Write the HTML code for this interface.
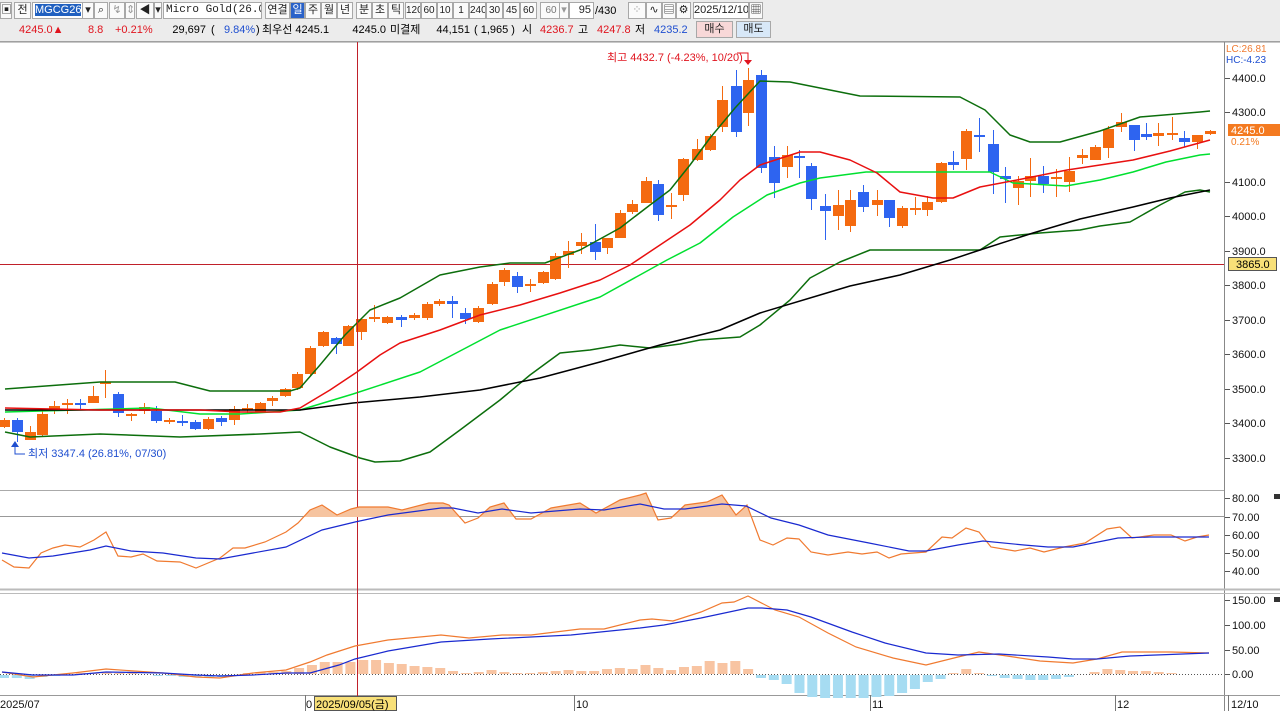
<!DOCTYPE html>
<html><head><meta charset="utf-8">
<style>
*{margin:0;padding:0;box-sizing:border-box}
body{width:1280px;height:711px;overflow:hidden;background:#fff;font-family:"Liberation Sans","Noto Sans CJK KR","NanumGothic",sans-serif;font-size:12px;position:relative}
.tb{position:absolute;left:0;top:0;width:1280px;height:42px;background:#ececec;border-bottom:1px solid #a0a0a0}
.a{position:absolute;white-space:nowrap;line-height:16px;font-size:11px}
.bx{position:absolute;height:17px;border:1px solid #a8a8a8;background:#fafafa;text-align:center;line-height:15px;font-size:11px;color:#222;white-space:nowrap;overflow:hidden}
.g{color:#999}
.r{color:#e0141e}.b{color:#1f4fd0}
svg{position:absolute;left:0;top:0}
</style></head><body>
<div class="tb">
 <div class="bx" style="left:0;top:2px;width:12px">▣</div>
 <div class="bx" style="left:14px;top:2px;width:17px">전</div>
 <div class="bx" style="left:32px;top:2px;width:62px;background:#fff;text-align:left;padding-left:2px"><span style="background:#2060c0;color:#fff">MGCG26</span></div>
 <div class="bx" style="left:82px;top:2px;width:12px">▾</div>
 <div class="bx" style="left:94px;top:2px;width:14px">⌕</div>
 <div class="bx g" style="left:109px;top:2px;width:16px">↯</div>
 <div class="bx g" style="left:125px;top:2px;width:10px">⇕</div>
 <div class="bx" style="left:136px;top:2px;width:18px">◀</div>
 <div class="bx" style="left:154px;top:2px;width:8px">▾</div>
 <div class="bx" style="left:163px;top:2px;width:99px;background:#fff;text-align:left;padding-left:2px;font-family:'Liberation Mono',monospace;font-size:11px">Micro Gold(26.02)</div>
 <div class="bx" style="left:265px;top:2px;width:25px">연결</div>
 <div class="bx" style="left:290px;top:2px;width:15px;background:#2a62c9;color:#fff">일</div>
 <div class="bx" style="left:305px;top:2px;width:16px">주</div>
 <div class="bx" style="left:321px;top:2px;width:16px">월</div>
 <div class="bx" style="left:337px;top:2px;width:16px">년</div>
 <div class="bx" style="left:356px;top:2px;width:16px">분</div>
 <div class="bx" style="left:372px;top:2px;width:16px">초</div>
 <div class="bx" style="left:388px;top:2px;width:16px">틱</div>
 <div class="bx" style="left:405px;top:2px;width:16px;font-size:10px">120</div>
 <div class="bx" style="left:421px;top:2px;width:16px;font-size:10px">60</div>
 <div class="bx" style="left:437px;top:2px;width:16px;font-size:10px">10</div>
 <div class="bx" style="left:453px;top:2px;width:16px;font-size:10px">1</div>
 <div class="bx" style="left:469px;top:2px;width:17px;font-size:10px">240</div>
 <div class="bx" style="left:486px;top:2px;width:17px;font-size:10px">30</div>
 <div class="bx" style="left:503px;top:2px;width:17px;font-size:10px">45</div>
 <div class="bx" style="left:520px;top:2px;width:17px;font-size:10px">60</div>
 <div class="bx" style="left:540px;top:2px;width:22px;font-size:10px;color:#777">60</div>
 <div class="bx g" style="left:559px;top:2px;width:10px">▾</div>
 <div class="bx" style="left:569px;top:2px;width:25px;background:#fff;text-align:right;padding-right:2px">95</div>
 <div class="a" style="left:595px;top:3px">/430</div>
 <div class="bx g" style="left:628px;top:2px;width:18px">⁘</div>
 <div class="bx" style="left:646px;top:2px;width:16px">∿</div>
 <div class="bx" style="left:662px;top:2px;width:14px">▤</div>
 <div class="bx" style="left:676px;top:2px;width:15px">⚙</div>
 <div class="bx" style="left:693px;top:2px;width:56px;background:#fff;font-size:11px">2025/12/10</div>
 <div class="bx" style="left:749px;top:2px;width:14px">▦</div>

 <div class="a r" style="left:19px;top:22px">4245.0▲</div>
 <div class="a r" style="left:88px;top:22px">8.8</div>
 <div class="a r" style="left:115px;top:22px">+0.21%</div>
 <div class="a" style="left:150px;top:22px;width:56px;text-align:right">29,697</div>
 <div class="a" style="left:211px;top:22px">(</div>
 <div class="a b" style="left:224px;top:22px">9.84%</div>
 <div class="a" style="left:256px;top:22px">)</div>
 <div class="a" style="left:262px;top:22px">최우선 4245.1</div>
 <div class="a" style="left:330px;top:22px;width:56px;text-align:right">4245.0</div>
 <div class="a" style="left:390px;top:22px">미결제</div>
 <div class="a" style="left:420px;top:22px;width:50px;text-align:right">44,151</div>
 <div class="a" style="left:474px;top:22px">( 1,965 )</div>
 <div class="a" style="left:522px;top:22px">시</div>
 <div class="a r" style="left:540px;top:22px">4236.7</div>
 <div class="a" style="left:578px;top:22px">고</div>
 <div class="a r" style="left:597px;top:22px">4247.8</div>
 <div class="a" style="left:635px;top:22px">저</div>
 <div class="a b" style="left:654px;top:22px">4235.2</div>
 <div class="bx" style="left:696px;top:21px;width:37px;background:#f8d8d8">매수</div>
 <div class="bx" style="left:736px;top:21px;width:35px;background:#d8e8f8">매도</div>
</div>

<svg id="s" width="1280" height="711" style="top:0">
 <defs><clipPath id="c70"><rect x="0" y="490" width="1224" height="27"/></clipPath></defs>
 <line x1="0" y1="42.5" x2="1280" y2="42.5" stroke="#c8c8c8"/>
 <line x1="1224.5" y1="42" x2="1224.5" y2="711" stroke="#888"/>
 <line x1="0" y1="490.5" x2="1224" y2="490.5" stroke="#aaa"/>
 <line x1="0" y1="516.5" x2="1224" y2="516.5" stroke="#999"/>
 <line x1="0" y1="589.5" x2="1280" y2="589.5" stroke="#bbb" stroke-width="2"/>
 <line x1="0" y1="593.5" x2="1280" y2="593.5" stroke="#bbb"/>
 <line x1="0" y1="695.5" x2="1280" y2="695.5" stroke="#999"/>
 <line x1="0" y1="674.5" x2="1224" y2="674.5" stroke="#555" stroke-dasharray="1,2"/>
 <line x1="0" y1="264.5" x2="1224" y2="264.5" stroke="#c0202a"/>
 <g id="candles"></g>
 <g id="hist"></g>
 <g fill="none" stroke-width="1.5" stroke-linejoin="round">
  <polyline stroke="#0c6e0c" points="5,389 100,382 175,382 210,391 290,391 300,388 320,365 345,335 370,310 400,298 440,275 480,267 510,263 545,263 580,250 620,228 650,205 670,190 690,165 710,138 735,108 760,81 790,82 860,96 960,97 985,110 1000,125 1010,135 1030,142 1060,142 1100,131 1140,117 1200,112 1210,111"/>
  <polyline stroke="#0c6e0c" points="5,432 30,437 100,434 180,437 260,434 300,432 330,447 360,458 375,462 400,461 430,452 460,430 500,400 530,375 560,353 590,350 620,345 650,348 680,344 700,340 740,337 760,325 790,300 810,278 840,262 870,250 900,250 980,250 1000,237 1040,233 1080,230 1100,226 1130,222 1160,205 1185,192 1200,190 1210,192"/>
  <polyline stroke="#00e030" points="5,412 150,408 200,414 240,414 300,410 353,394 420,372 500,330 600,297 667,260 700,243 733,217 767,195 800,183 820,178 866,172 950,172 990,172 1013,183 1066,186 1100,180 1133,172 1166,162 1200,155 1210,154"/>
  <polyline stroke="#000" points="5,410 100,410 300,410 353,403 420,397 480,390 540,378 600,362 660,345 720,330 760,313 820,295 850,286 900,275 950,260 980,250 1033,233 1080,219 1133,207 1170,198 1210,190"/>
  <polyline stroke="#e81010" points="5,408 100,410 200,410 240,412 280,412 300,408 330,390 357,372 380,355 400,343 440,330 480,315 520,305 560,293 600,280 630,265 660,245 690,225 720,200 740,180 760,165 800,152 820,152 850,160 877,173 900,192 933,198 953,198 980,187 1017,180 1067,170 1133,160 1170,151 1210,140"/>
 </g>
 <line x1="357.5" y1="42" x2="357.5" y2="711" stroke="#c0202a"/>
 <text x="607" y="61" fill="#e0141e" font-size="11">최고 4432.7 (-4.23%, 10/20)</text>
 <polyline points="737,53 748,53 748,62" fill="none" stroke="#e0141e"/>
 <path d="M744,60 L752,60 L748,65Z" fill="#e0141e"/>
 <polyline points="15,443 15,454 25,454" fill="none" stroke="#1f4fd0"/>
 <path d="M11,447 L19,447 L15,441Z" fill="#1f4fd0"/>
 <text x="28" y="457" fill="#1f4fd0" font-size="11">최저 3347.4 (26.81%, 07/30)</text>
 <polygon clip-path="url(#c70)" fill="#f6c4a0" points="0,517 2,560 14,567 29,568 41,553 53,548 65,545 80,547 94,540 106,532 118,556 131,557 143,554 157,561 180,562 196,568 220,558 233,548 245,548 265,542 286,532 298,523 310,510 322,505 337,515 351,509 359,507 388,507 402,510 429,503 443,503 449,505 465,523 478,518 490,507 504,503 516,519 531,519 551,508 580,503 596,513 620,500 640,495 646,493 658,520 671,518 685,505 707,502 722,495 736,515 747,505 760,540 1209,535 1209,600 0,600"/>
 <g fill="none" stroke-width="1.2">
 <polyline stroke="#f07a30" points="2,560 14,567 29,568 41,553 53,548 65,545 80,547 94,540 106,532 118,556 131,557 143,554 157,561 180,562 196,568 220,558 233,548 245,548 265,542 286,532 298,523 310,510 322,505 337,515 351,509 359,507 388,507 402,510 429,503 443,503 449,505 465,523 478,518 490,507 504,503 516,519 531,519 551,508 580,503 596,513 620,500 640,495 646,493 658,520 671,518 685,505 707,502 722,495 736,515 747,505 760,540 773,545 787,538 799,539 811,552 828,555 848,552 862,554 877,552 889,558 901,554 926,552 942,537 952,538 966,528 979,532 991,547 1015,551 1030,548 1044,552 1064,547 1085,543 1107,529 1120,527 1132,538 1154,535 1171,535 1185,541 1197,537 1209,535"/>
 <polyline stroke="#1a2ad0" points="2,553 29,558 53,556 90,550 106,546 131,551 163,553 196,558 220,559 253,553 286,547 322,530 355,522 388,515 441,508 453,508 478,513 502,509 531,513 580,509 604,510 640,504 664,509 685,509 722,504 746,506 771,518 799,525 828,535 869,543 909,551 926,551 958,545 983,541 1024,545 1048,547 1073,547 1118,538 1150,537 1209,537"/>
 <polyline stroke="#f07a30" points="2,672 33,677 73,673 106,669 163,673 196,677 220,678 253,673 286,670 310,662 327,655 355,646 388,640 441,635 469,638 502,635 531,635 580,629 604,629 640,620 652,619 673,621 701,612 722,603 734,602 748,596 775,610 799,617 828,633 856,647 893,658 926,665 958,657 979,652 1007,656 1040,661 1073,663 1097,659 1122,652 1171,652 1209,653"/>
 <polyline stroke="#1a2ad0" points="2,672 33,675 73,675 106,672 163,673 196,675 220,676 253,675 286,673 310,673 339,665 355,659 388,651 441,642 490,639 571,635 640,628 664,625 701,618 748,608 762,608 787,610 811,617 852,632 885,643 926,653 958,655 999,654 1048,657 1073,659 1097,659 1130,656 1209,653"/>
 </g>
 <g font-size="11" fill="#111" id="ax"></g>
 <text x="1226" y="52" fill="#f07a30" font-size="10">LC:26.81</text>
 <text x="1226" y="63" fill="#1f4fd0" font-size="10">HC:-4.23</text>
 <rect x="1228" y="124" width="52" height="12" fill="#f47a20"/>
 <text x="1231" y="134" fill="#fff" font-size="11">4245.0</text>
 <text x="1231" y="145" fill="#f47a20" font-size="10">0.21%</text>
 <rect x="1228.5" y="257.5" width="48" height="13" fill="#f8e078" stroke="#555"/>
 <text x="1236" y="268" fill="#000" font-size="11">3865.0</text>
 <rect x="1274" y="494" width="6" height="5" fill="#333"/>
 <rect x="1274" y="597" width="6" height="5" fill="#333"/>
 <g stroke="#777"><line x1="305.5" y1="695" x2="305.5" y2="711"/><line x1="574.5" y1="695" x2="574.5" y2="711"/><line x1="870.5" y1="695" x2="870.5" y2="711"/><line x1="1115.5" y1="695" x2="1115.5" y2="711"/><line x1="1228.5" y1="695" x2="1228.5" y2="711"/></g>
 <g font-size="11" fill="#111">
  <text x="0" y="708">2025/07</text><text x="306" y="708">0</text><text x="576" y="708">10</text><text x="872" y="708">11</text><text x="1117" y="708">12</text><text x="1231" y="708">12/10</text>
 </g>
 <rect x="314.5" y="696.5" width="82" height="14" fill="#f8e078" stroke="#555"/>
 <text x="316" y="708" font-size="11" fill="#000">2025/09/05(금)</text>
</svg>
<script>
var C=[[4,420,427,418,428,'o'],[17,420,432,418,442,'b'],[30,432,440,426,440,'o'],[42,414,435,410,437,'o'],[54,406,410,401,414,'o'],[67,403,405,399,414,'o'],[80,403,405,399,410,'b'],[93,396,403,386,403,'o'],[105,382,384,370,398,'o'],[118,394,413,392,417,'b'],[131,414,416,413,421,'o'],[144,407,411,403,414,'o'],[156,411,421,406,423,'b'],[169,420,421,418,424,'o'],[182,421,423,415,426,'b'],[195,422,429,420,430,'b'],[208,419,429,417,430,'o'],[221,418,422,416,426,'b'],[234,409,420,406,425,'o'],[247,408,409,404,414,'o'],[260,403,412,402,413,'o'],[272,398,401,396,406,'o'],[285,389,396,388,397,'o'],[297,374,388,372,390,'o'],[310,348,374,346,376,'o'],[323,332,346,331,347,'o'],[336,338,344,337,354,'b'],[348,326,346,325,346,'o'],[361,319,332,318,340,'o'],[374,317,319,305,322,'o'],[387,317,323,316,324,'o'],[401,317,320,315,327,'b'],[414,315,318,313,320,'o'],[427,304,318,302,320,'o'],[439,301,304,299,306,'o'],[452,301,304,296,318,'b'],[465,313,319,308,324,'b'],[478,308,322,306,323,'o'],[492,284,304,282,305,'o'],[504,270,282,268,286,'o'],[517,276,287,272,293,'b'],[530,284,286,279,292,'o'],[543,272,283,271,284,'o'],[555,256,279,253,280,'o'],[568,251,255,241,268,'o'],[581,242,246,233,254,'o'],[595,242,252,224,260,'b'],[607,238,248,238,254,'o'],[620,213,238,210,238,'o'],[632,204,212,200,214,'o'],[646,181,203,177,203,'o'],[658,184,215,180,221,'b'],[671,205,207,193,219,'o'],[683,159,195,158,201,'o'],[697,149,160,139,161,'o'],[710,136,150,134,151,'o'],[722,100,127,86,132,'o'],[736,86,132,70,137,'b'],[748,80,113,68,126,'o'],[761,75,168,70,173,'b'],[774,157,183,146,198,'b'],[787,155,167,146,178,'o'],[799,156,158,150,178,'b'],[811,166,199,163,210,'b'],[825,206,211,194,240,'b'],[838,205,216,190,230,'o'],[850,200,226,190,232,'o'],[863,192,207,185,212,'b'],[877,200,205,190,216,'o'],[889,200,218,200,227,'b'],[902,208,226,206,228,'o'],[915,208,210,197,215,'o'],[927,202,210,196,216,'o'],[941,163,202,162,203,'o'],[953,162,165,151,170,'b'],[966,131,159,129,170,'o'],[979,135,137,118,152,'b'],[993,144,172,130,194,'b'],[1005,176,179,167,203,'b'],[1018,181,188,176,205,'o'],[1030,176,181,158,197,'o'],[1043,176,184,166,193,'b'],[1056,177,179,169,197,'o'],[1069,171,182,157,192,'o'],[1082,155,158,149,164,'o'],[1095,147,160,145,160,'o'],[1108,129,148,126,158,'o'],[1121,122,127,113,132,'o'],[1134,125,140,125,151,'b'],[1146,134,137,123,140,'b'],[1158,133,136,123,146,'o'],[1172,133,135,117,140,'o'],[1184,138,142,131,147,'b'],[1197,135,142,135,149,'o'],[1210,131,134,130,135,'o']];
var h='';
C.forEach(function(c){var col=c[5]=='o'?'#f46a10':'#2e64f0';var x=c[0];
h+='<line x1="'+(x+.5)+'" y1="'+c[3]+'" x2="'+(x+.5)+'" y2="'+c[4]+'" stroke="'+col+'"/>';
var ht=Math.max(c[2]-c[1],2);h+='<rect x="'+(x-5)+'" y="'+c[1]+'" width="11" height="'+ht+'" fill="'+col+'"/>';});
document.getElementById('candles').innerHTML=h;
var H=[-3,-3,-4,-2,-1,0,1,1,2,1,1,0,-1,-1,-2,-2,-2,-2,-1,1,2,2,3,6,9,12,12,12,14,14,11,10,8,7,6,3,1,2,4,2,1,1,2,3,4,3,3,5,6,5,9,6,4,7,8,13,11,13,5,-3,-5,-9,-18,-22,-23,-23,-23,-23,-22,-21,-18,-14,-7,-4,1,5,1,-1,-3,-4,-5,-5,-4,-2,0,2,5,4,3,3,2,1,0,0,0];
var g='';H.forEach(function(v,i){if(!v)return;var x=4+12.83*i;g+='<rect x="'+(x-5)+'" y="'+(v>0?674-v:675)+'" width="10" height="'+Math.abs(v)+'" fill="'+(v>0?'#f8c4a2':'#a6dcf2')+'"/>';});
document.getElementById('hist').innerHTML=g;
var a='';[[4400,78],[4300,112],[4100,182],[4000,216],[3900,251],[3800,285],[3700,320],[3600,354],[3500,389],[3400,423],[3300,458]].forEach(function(p){a+='<line x1="1225" y1="'+(p[1]+.5)+'" x2="1230" y2="'+(p[1]+.5)+'" stroke="#555"/><text x="1232" y="'+(p[1]+4)+'">'+p[0]+'.0</text>';});
[['80.00',498],['70.00',517],['60.00',535],['50.00',553],['40.00',571],['150.00',600],['100.00',625],['50.00',650],['0.00',674]].forEach(function(p){a+='<line x1="1225" y1="'+(p[1]+.5)+'" x2="1230" y2="'+(p[1]+.5)+'" stroke="#555"/><text x="1232" y="'+(p[1]+4)+'">'+p[0]+'</text>';});
document.getElementById('ax').innerHTML=a;
</script>
</body></html>
